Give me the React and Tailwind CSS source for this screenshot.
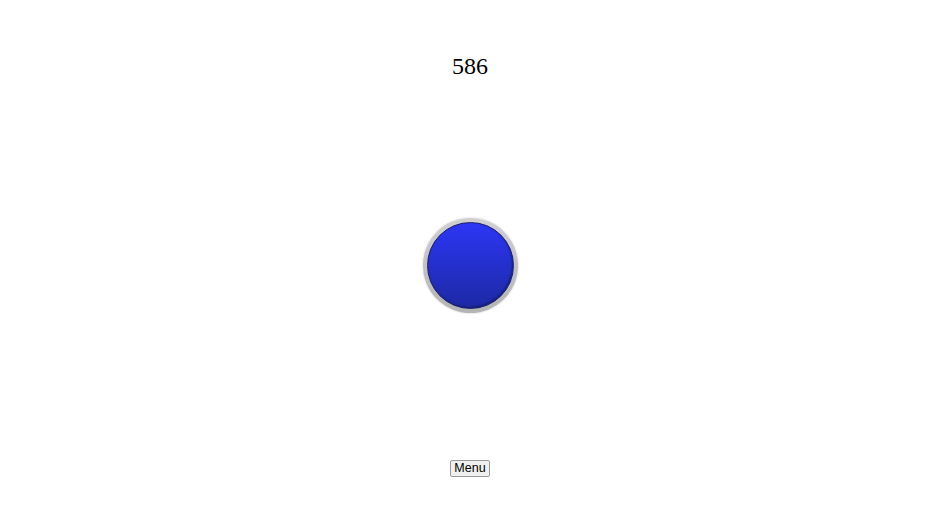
import React, { useState } from "react";

const App = () => {
  const [count, setCount] = useState(586);

  return (
    <div className="w-full h-[529px] bg-white flex flex-col items-center overflow-hidden">
      {/* Counter */}
      <div className="mt-[53px] text-[24px] leading-[27px] text-black font-['Liberation_Serif',serif]">
        {count}
      </div>

      {/* Big button */}
      <button
        onClick={() => setCount((c) => c + 1)}
        className="mt-[138px] w-[95px] h-[95px] rounded-full bg-gradient-to-b from-[#d0d0d0] to-[#b4b4b4] p-[4px] shadow-[0_0_2px_rgba(0,0,0,0.25)] cursor-pointer"
      >
        <div className="w-full h-full rounded-full border border-[#1a1f6e] bg-gradient-to-b from-[#2c36f6] to-[#1d29a4] shadow-[inset_-1px_-1px_2px_rgba(0,0,0,0.35)]" />
      </button>

      {/* Menu */}
      <button className="mt-[147px] px-[3px] h-[17px] leading-[15px] border border-[#9a9a9a] rounded-[2px] bg-[#efefef] text-[12.5px] text-black font-['Liberation_Sans',Arial,sans-serif]">
        Menu
      </button>
    </div>
  );
};

export default App;
